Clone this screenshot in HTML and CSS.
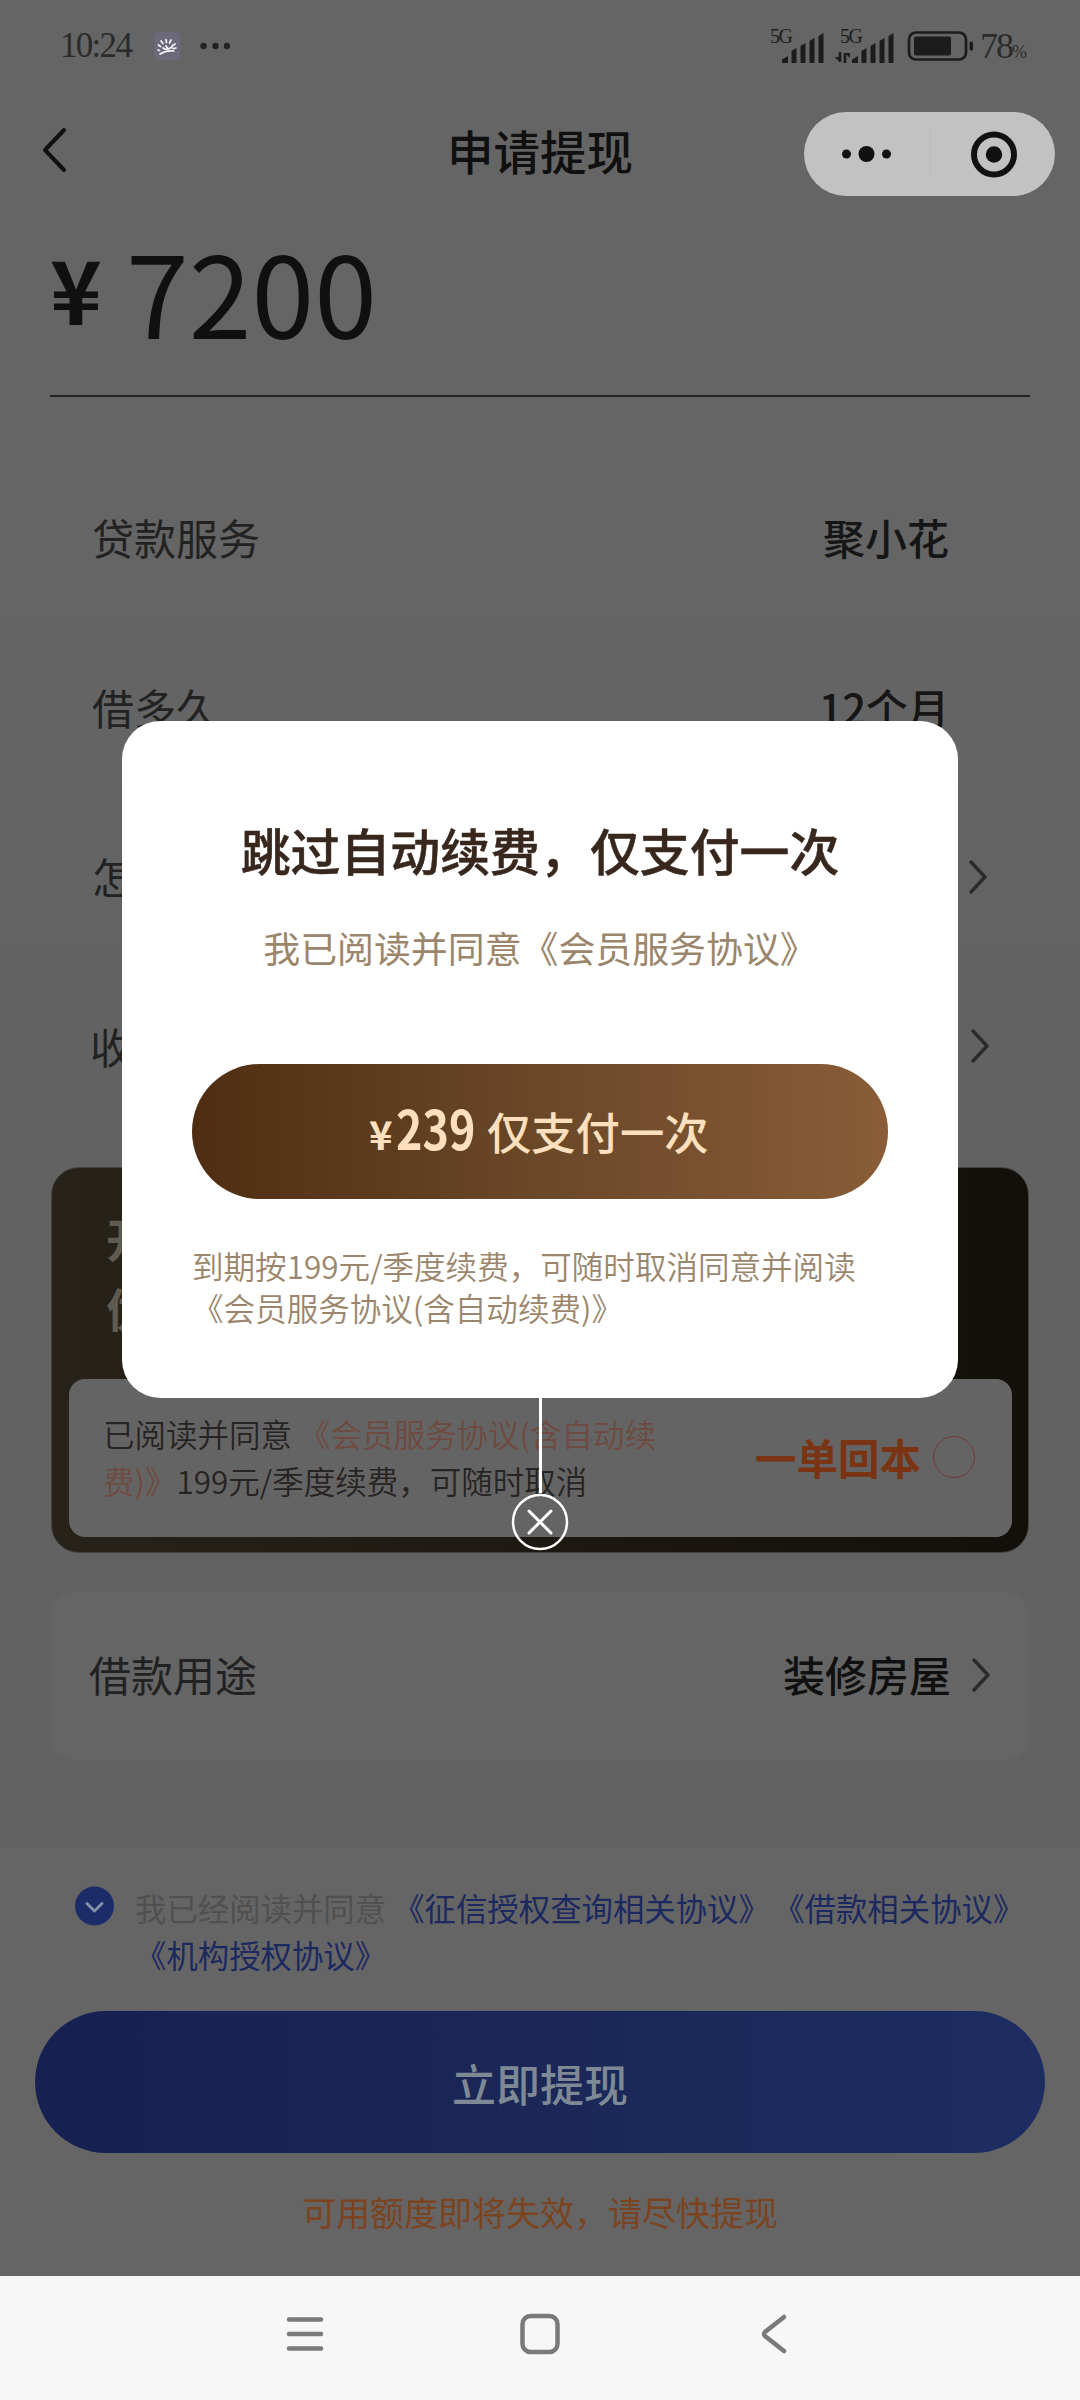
FILE: index.html
```html
<!DOCTYPE html>
<html lang="zh-CN">
<head>
<meta charset="utf-8">
<title>申请提现</title>
<link rel="stylesheet" href="styles.css">
</head>
<body>
<div class="phone">
  <div class="status">
    <span class="time">10:24</span>
    <svg class="app-badge" width="32" height="32" viewBox="0 0 32 32"><rect x="3" y="2" width="26" height="28" rx="5" fill="#6c6a7a"/><g stroke="#f4f4fa" stroke-width="1.700" stroke-linecap="round" fill="none"><path d="M9 24Q15 20 23 21M12 18Q16 21 21 17M7 20l1.500 .5M7.500 15l2 1.500M10 11l2 2.500M15 9.500l.5 3M20 10l-1.500 3M24 14l-3 2M25 18l-3 .6M15 16l1.500 2"/></g></svg>
    <svg class="more" width="30" height="10" viewBox="0 0 30 10" fill="#222"><circle cx="3.500" cy="5" r="3.200"/><circle cx="15.500" cy="5" r="3.200"/><circle cx="27" cy="5" r="3.200"/></svg>
    <div class="signals">
      <svg width="60" height="40" viewBox="0 0 60 40" fill="#1c1c1c"><text class="net" x="4" y="17">5G</text><path d="M16 37v-3.500l6-3.500v7zM25.500 25l5-3v15h-5zM34.500 20l5-3v20h-5zM43.500 15l5-3v25h-5zM52.500 10l5-3v30h-5z"/></svg>
      <svg width="70" height="40" viewBox="0 0 70 40" fill="#1c1c1c"><text class="net" x="14" y="17">5G</text><path d="M26 37v-3.500l6-3.500v7zM35.500 25l5-3v15h-5zM44.500 20l5-3v20h-5zM53.500 15l5-3v25h-5zM62.500 10l5-3v30h-5z"/><path d="M14 26v10M19 37V27" stroke="#1c1c1c" stroke-width="2.600"/><path d="M8.500 31h5.500v5zM19 27h5v5z"/></svg>
    </div>
    <svg class="battery" width="68" height="32" viewBox="0 0 68 32"><rect x="3" y="2.500" width="57" height="27" rx="7" fill="none" stroke="#1c1c1c" stroke-width="2.700"/><rect x="8" y="6.500" width="37" height="19" rx="2" fill="#1c1c1c"/><rect x="63.500" y="11.500" width="3.500" height="9" rx="1.500" fill="#1c1c1c"/></svg>
    <span class="level">78<small>%</small></span>
  </div>

  <header class="header">
    <svg class="back" width="30" height="50" viewBox="0 0 30 50"><path d="M24 5L5 25 24 45" fill="none" stroke="#101010" stroke-width="4" stroke-linecap="round" stroke-linejoin="round"/></svg>
    <h1>申请提现</h1>
    <div class="capsule">
      <svg width="251" height="84" viewBox="0 0 251 84" fill="#111"><circle cx="42.500" cy="42" r="4.500"/><circle cx="62.500" cy="42" r="8"/><circle cx="82.500" cy="42" r="4.500"/><path d="M126 16v48" stroke="#b8b8b8"/><circle cx="190" cy="42.500" r="20" fill="none" stroke="#111" stroke-width="6"/><circle cx="190" cy="42.500" r="8.200"/></svg>
    </div>
  </header>

  <section class="amount"><span class="yen">¥</span><span class="sum">7200</span></section>

  <section class="details">
    <div class="row"><span>贷款服务</span><b>聚小花</b></div>
    <div class="row"><span>借多久</span><b class="term">12个月</b></div>
    <div class="row nav"><span>怎</span><svg width="20" height="36" viewBox="0 0 20 36"><path class="arrow" d="M2 3l14 15L2 33"/></svg></div>
    <div class="row nav last"><span>收</span><svg width="20" height="36" viewBox="0 0 20 36"><path class="arrow" d="M2 3l14 15L2 33"/></svg></div>
  </section>

  <section class="vip">
    <p class="vip-title">开<br>优</p>
    <div class="vip-panel">
      <p>已阅读并同意 <em>《会员服务协议(含自动续<br>费)》</em>199元/季度续费，可随时取消</p>
      <strong>一单回本</strong><i class="radio"></i>
    </div>
  </section>

  <section class="purpose">
    <span>借款用途</span><b>装修房屋</b><svg width="20" height="36" viewBox="0 0 20 36"><path class="arrow" d="M2 3l14 15L2 33"/></svg>
  </section>

  <footer class="bottom">
    <div class="agree">
      <svg width="40" height="40" viewBox="0 0 40 40"><circle cx="19.500" cy="20" r="19.500" fill="#1b2c68"/><path d="M12 17.500l7.500 7.500 7.500-7.500" fill="none" stroke="#8490a6" stroke-width="3" stroke-linecap="round" stroke-linejoin="round"/></svg>
      <p>我已经阅读并同意 <em>《征信授权查询相关协议》</em><em class="next">《借款相关协议》</em><br><em>《机构授权协议》</em></p>
    </div>
    <div class="submit">立即提现</div>
    <p class="tip">可用额度即将失效，请尽快提现</p>
  </footer>

  <nav class="sysnav">
    <svg width="40" height="44" viewBox="0 0 40 44"><path d="M4 7.500h32M4 22h32M4 36.500h32" stroke="#7a7a7a" stroke-width="4.500" stroke-linecap="round"/></svg>
    <svg width="44" height="44" viewBox="0 0 44 44"><rect x="4.500" y="4" width="35" height="36" rx="8" fill="none" stroke="#7a7a7a" stroke-width="4.500"/></svg>
    <svg width="32" height="44" viewBox="0 0 32 44"><path d="M26 5L7 20q-2 2 0 4l19 15" fill="none" stroke="#7a7a7a" stroke-width="4.500" stroke-linecap="round"/></svg>
  </nav>

  <div class="dialog-wrap">
    <div class="dialog">
      <h2>跳过自动续费，仅支付一次</h2>
      <p class="sub">我已阅读并同意《会员服务协议》</p>
      <div class="pay"><span class="pay-yen">¥</span><span class="pay-num">239</span><span class="pay-label">仅支付一次</span></div>
      <p class="terms">到期按199元/季度续费，可随时取消同意并阅读<br>《会员服务协议(含自动续费)》</p>
    </div>
    <div class="stem"></div>
    <svg width="58" height="58" viewBox="0 0 58 58" fill="none" stroke="#fff"><circle cx="29" cy="29" r="27" stroke-width="2.500"/><path d="M18 18l22 22M40 18L18 40" stroke-width="3" stroke-linecap="round"/></svg>
  </div>
</div>
</body>
</html>
```
FILE: styles.css
```css
* { box-sizing: border-box; margin: 0; padding: 0; }
body { background: #646464; font-family: "Noto Sans CJK SC", sans-serif; }
svg { display: block; flex: none; }
em, i { font-style: normal; }
b { font-weight: 500; }

.phone { position: relative; width: 1080px; height: 2400px; overflow: hidden; display: flex; flex-direction: column; color: #222; background: linear-gradient(#656565 0, #656565 600px, #626262 1150px); white-space: nowrap; }

.status { height: 92px; display: flex; align-items: center; padding-left: 60px; font-family: "Liberation Serif", serif; }
.time { width: 91px; font-size: 35px; letter-spacing: -1.7px; color: #2b2b2b; }
.more { margin-left: 17px; }
.signals { display: flex; margin-left: 536px; width: 130px; }
.net { font-size: 20px; font-family: "Liberation Serif", serif; letter-spacing: -1.5px; }
.battery { margin-left: 10px; }
.level { margin-left: 6px; font-size: 36px; letter-spacing: -2px; color: #2b2b2b; }
.level small { font-size: 18px; }

.header { position: relative; height: 124px; flex: none; display: flex; align-items: center; justify-content: center; padding-bottom: 8px; }
.header h1 { font-size: 46.500px; font-weight: 500; line-height: 60px; color: #101010; }
.back { position: absolute; left: 40px; top: 33px; }
.capsule { position: absolute; left: 804px; top: 20px; width: 251px; height: 84px; border-radius: 42px; background: #c2c2c2; }

.amount { height: 181px; flex: none; margin: 0 50px; border-bottom: 2px solid #222; color: #101010; display: flex; align-items: flex-start; }
.yen { font-size: 88px; font-weight: 700; width: 76px; line-height: 142px; }
.sum { font-size: 113px; line-height: 149px; }

.details { padding: 55px 91px 0 92px; height: 770px; flex: none; font-size: 42px; }
.row { height: 169.500px; display: flex; justify-content: space-between; align-items: center; padding-right: 40px; }
.row b { color: #161616; }
.row .term { letter-spacing: -.4px; }
.row.nav { padding-right: 0; }
.row.nav svg { margin-top: 2px; }
.row.last { margin-left: -2px; margin-right: -2px; }
.arrow { fill: none; stroke: #2b2b2b; stroke-width: 3.400; stroke-linecap: round; stroke-linejoin: round; }

.vip { margin: 0 51px; height: 386px; flex: none; border-radius: 28px; border: 1px solid #44413a; background: linear-gradient(90deg, #28231a, #1d1811 50%, #130f0a); padding: 34px 16px 16px 17px; }
.vip-title { margin-left: 37px; font-size: 46px; font-weight: 700; line-height: 70px; color: #5f5b50; height: 177px; }
.vip-panel { height: 158px; border-radius: 16px; background: #656464; display: flex; align-items: center; padding: 0 37px 2px 34px; font-size: 31.500px; line-height: 47px; }
.vip-panel p { flex: 1; font-weight: 350; color: #262322; }
.vip-panel em { color: #6e4a40; }
.vip-panel strong { font-size: 41.500px; color: #7b3413; margin-right: 12px; }
.radio { width: 42px; height: 42px; border: 1.500px solid #713a34; border-radius: 50%; }

.purpose { margin: 39px 51px 0; height: 168px; flex: none; border-radius: 24px; background: #656565; display: flex; align-items: center; padding: 0 37px 5px 38px; font-size: 42px; }
.purpose svg { margin-top: 2px; }
.purpose b { margin: 0 21px 0 auto; color: #101010; }

.bottom { margin-top: 88px; height: 428px; flex: none; background: #656565; padding-top: 38px; }
.agree { display: flex; padding-left: 75px; gap: 20px; height: 125px; }
.agree p { margin-top: -1px; font-size: 31.400px; line-height: 46.500px; color: #505050; }
.agree em { color: #1c2960; }
.agree .next { margin-left: 19px; }
.submit { margin: 0 35px; height: 142px; border-radius: 71px; background: linear-gradient(90deg, #172151, #1a2757 50%, #1d2d62); color: #7e8995; font-size: 44px; font-weight: 500; line-height: 144px; text-align: center; }
.tip { margin-top: 34px; font-size: 34px; line-height: 50px; text-align: center; color: #7c431f; }

.sysnav { height: 124px; flex: none; background: #f7f7f7; display: flex; padding: 36px 0 0 285px; }
.sysnav svg:nth-child(2) { margin-left: 193px; }
.sysnav svg:nth-child(3) { margin-left: 196px; }

.dialog-wrap { position: absolute; left: 122px; top: 721px; width: 836px; display: flex; flex-direction: column; align-items: center; }
.dialog { width: 836px; height: 677px; border-radius: 38px; background: #fff; padding: 93px 70px 0; color: #9b866c; }
.dialog h2 { font-size: 49.900px; font-weight: 500; line-height: 70px; text-align: center; color: #38271d; -webkit-text-stroke: .5px #38271d; }
.sub { margin-top: 38px; font-size: 36.900px; line-height: 50px; text-align: center; font-weight: 400; }
.pay { margin-top: 92px; height: 135px; border-radius: 68px; background: linear-gradient(90deg, #4e2d12, #6a4828 50%, #8a5c38); color: #ffe0be; display: flex; align-items: baseline; padding-left: 177px; line-height: 126px; font-weight: 500; }
.pay-yen { font-size: 40px; width: 27px; font-weight: 700; }
.pay-num { font-size: 54px; font-weight: 700; width: 91px; transform: scaleX(.83); transform-origin: 0 50%; }
.pay-label { font-size: 44.300px; }
.terms { margin-top: 45px; font-size: 31.550px; line-height: 42px; font-weight: 350; }
.stem { width: 3px; height: 95px; background: #fff; }
```
